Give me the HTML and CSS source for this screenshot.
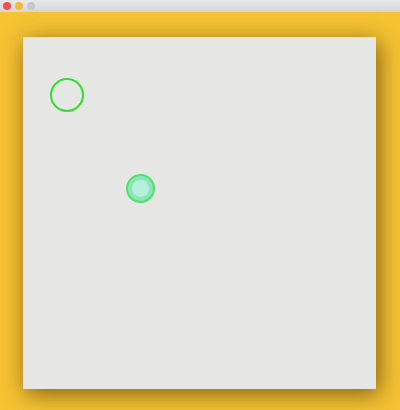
FILE: index.html
```html
<!DOCTYPE html>
<html>
<head>
<meta charset="utf-8">
<link rel="stylesheet" href="styles.css">
</head>
<body>
<div class="titlebar">
  <span class="light red"></span>
  <span class="light amber"></span>
  <span class="light gray"></span>
</div>
<div class="stage">
  <div class="panel">
    <div class="ring"></div>
    <div class="dot"><div class="dot-inner"></div></div>
  </div>
</div>
</body>
</html>
```

FILE: styles.css
```css
html, body {
  margin: 0;
  padding: 0;
  width: 400px;
  height: 410px;
  overflow: hidden;
  font-family: "Liberation Sans", sans-serif;
}
.titlebar {
  height: 12px;
  background: linear-gradient(#e8e8e8, #d6d6d6);
  display: flex;
  align-items: center;
  gap: 4px;
  padding-left: 3px;
  box-sizing: border-box;
}
.light {
  width: 8px;
  height: 8px;
  border-radius: 50%;
  display: block;
}
.red { background: #f0524d; }
.amber { background: #f4b83a; }
.gray { background: #c8c8c8; }
.stage {
  height: 398px;
  background: #f6c333;
  padding: 25px 24px 0 23px;
  box-sizing: border-box;
}
.panel {
  position: relative;
  width: 353px;
  height: 352px;
  background: #e6e7e5;
  box-shadow: 3px 5px 22px rgba(80, 50, 0, 0.7);
}
.ring {
  position: absolute;
  left: 27px;
  top: 41px;
  width: 30px;
  height: 30px;
  border: 2px solid #2ee02e;
  border-radius: 50%;
}
.dot {
  position: absolute;
  left: 103px;
  top: 137px;
  width: 25px;
  height: 25px;
  border: 2px solid #4be36a;
  border-radius: 50%;
  background: #8fe3b4;
  display: flex;
  align-items: center;
  justify-content: center;
}
.dot-inner {
  width: 17px;
  height: 17px;
  border-radius: 50%;
  background: #b5f0dc;
}
```
